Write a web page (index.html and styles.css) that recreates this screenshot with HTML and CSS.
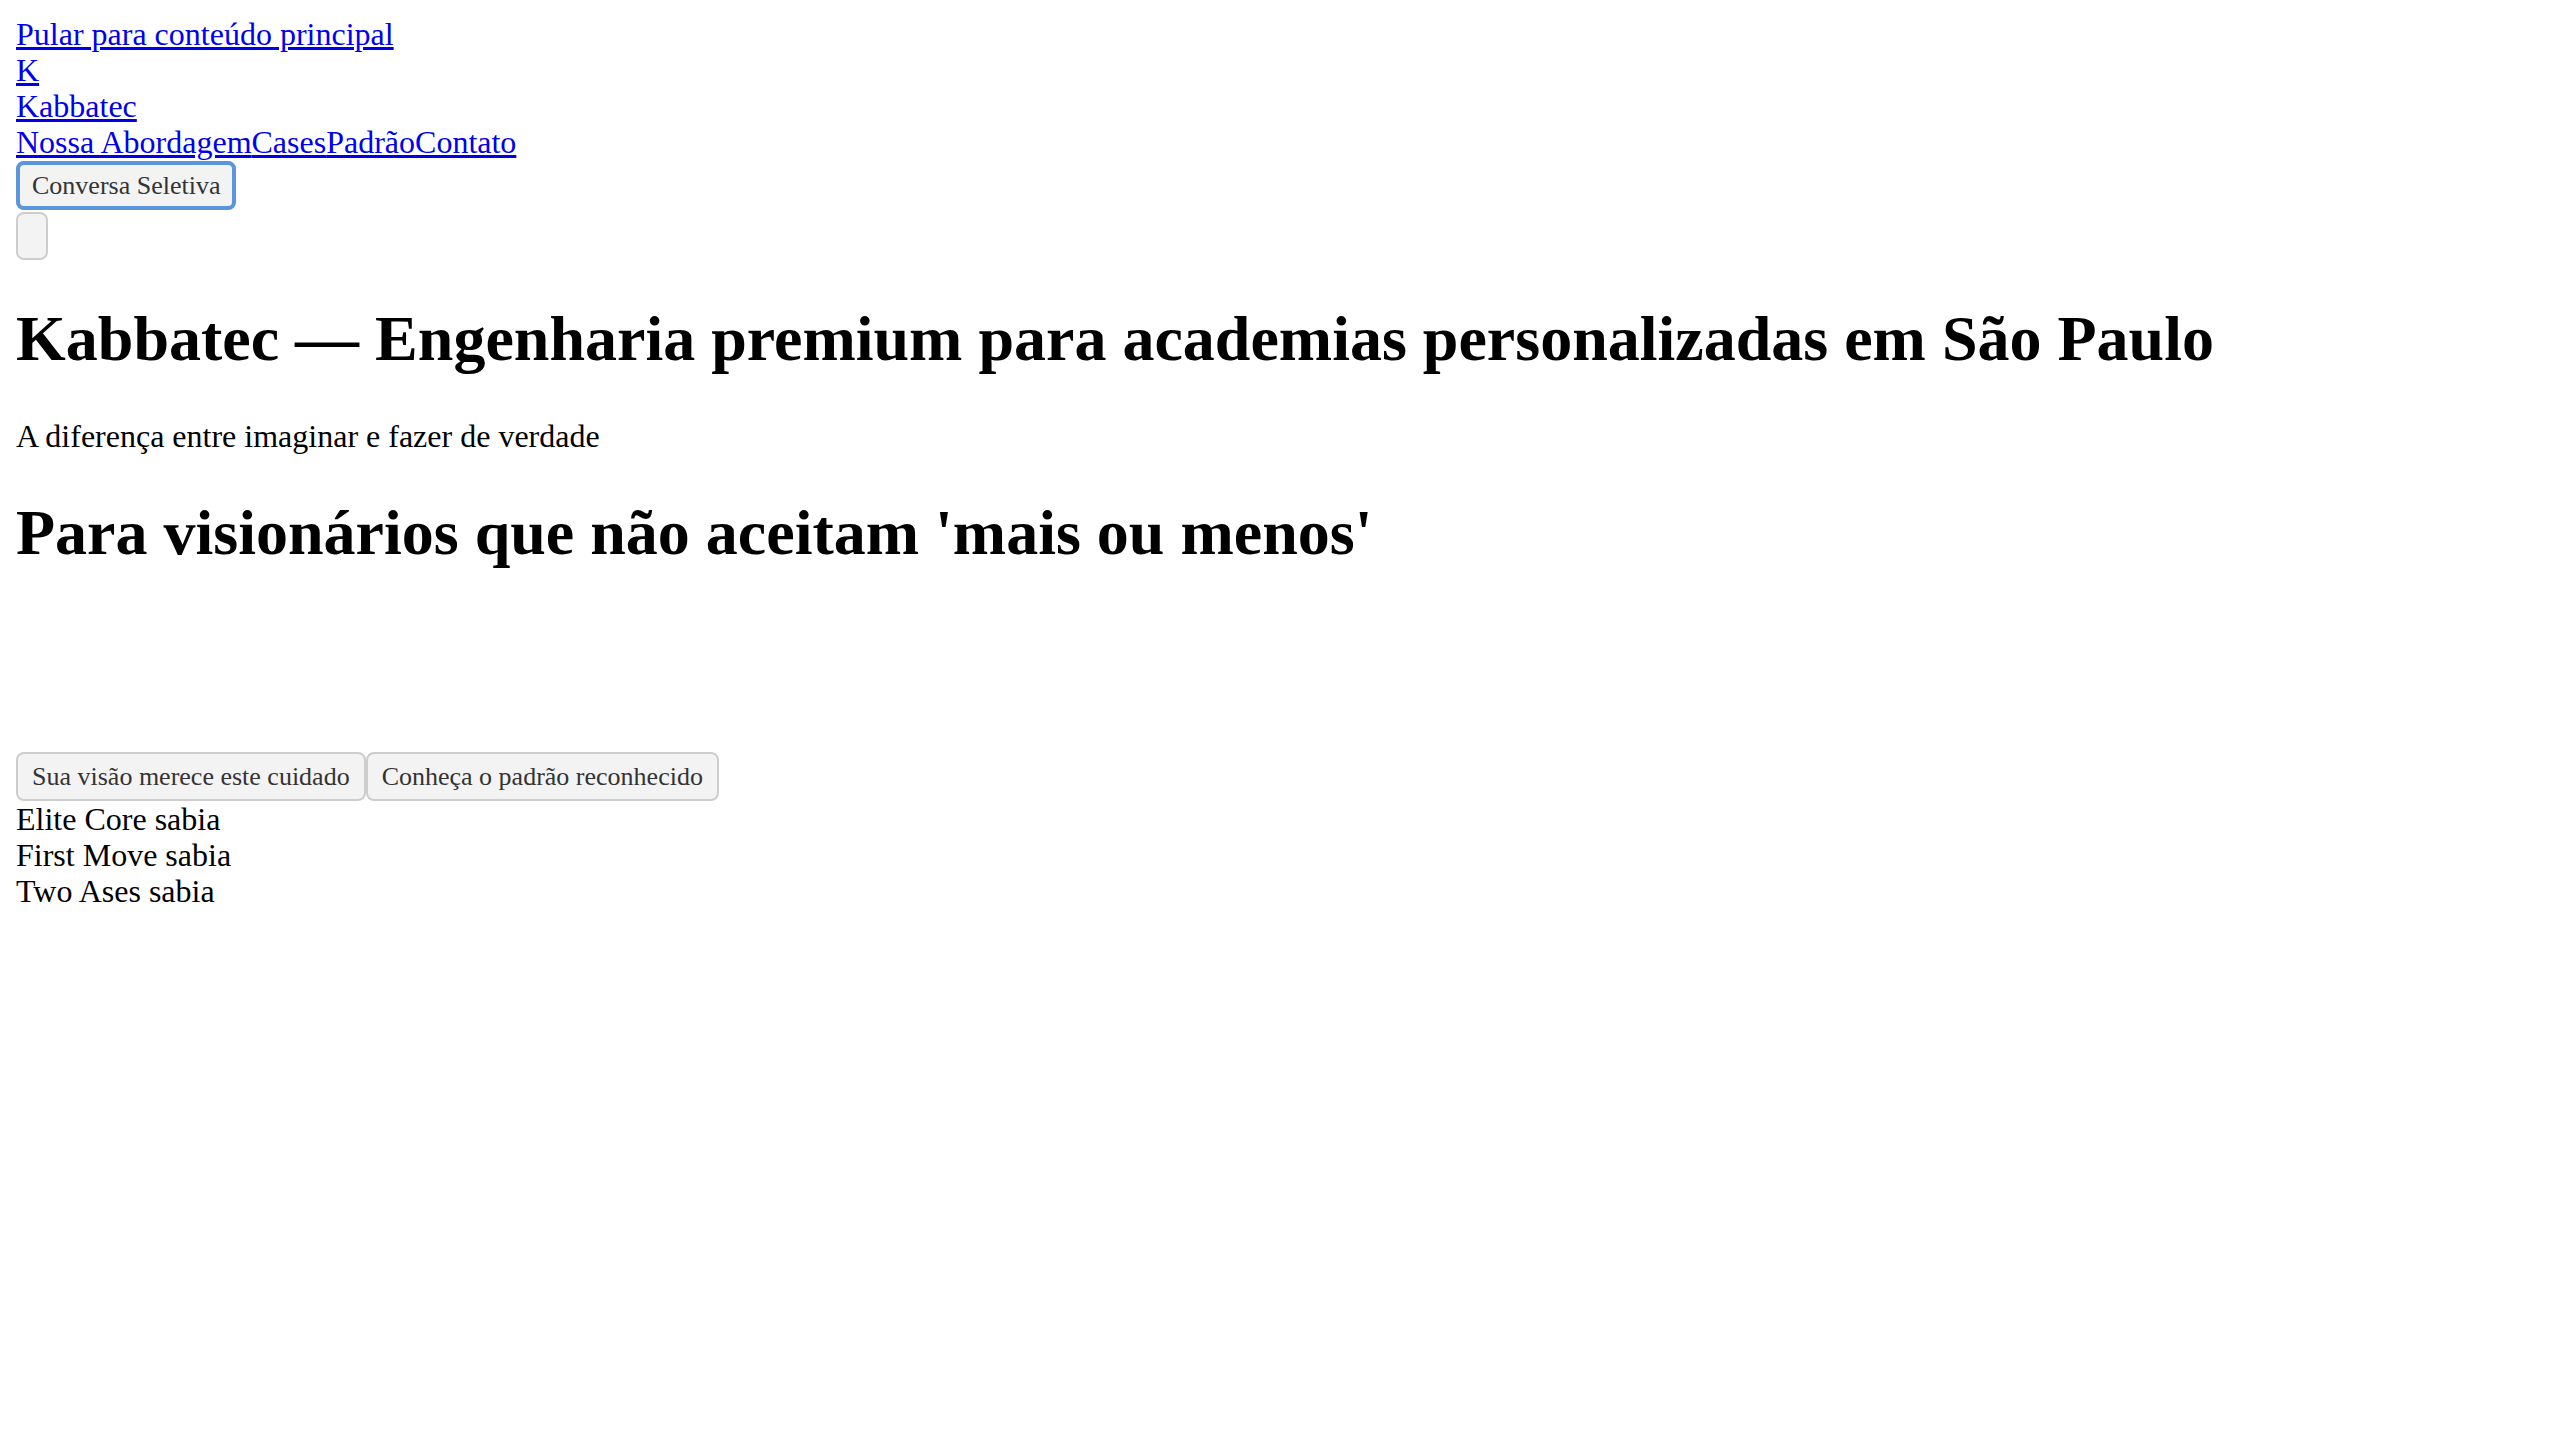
FILE: index.html
```html
<!DOCTYPE html>
<html lang="pt-BR" class="page">
<head>
<meta charset="utf-8">
<title>Kabbatec</title>
<link rel="stylesheet" href="styles.css">
</head>
<body class="doc">
<a class="skip" href="#main">Pular para conteúdo principal</a>
<header class="header">
  <div class="brand">
    <a href="#">K</a>
    <a href="#">Kabbatec</a>
  </div>
  <nav class="nav"><a href="#">Nossa Abordagem</a><a href="#">Cases</a><a href="#">Padrão</a><a href="#">Contato</a></nav>
  <div class="actions">
    <button class="btn btn-focus" type="button">Conversa Seletiva</button>
    <button class="btn btn-menu" type="button" aria-label="Menu"></button>
  </div>
</header>
<main id="main" class="main">
  <h1 class="title">Kabbatec — Engenharia premium para academias personalizadas em São Paulo</h1>
  <p class="lead">A diferença entre imaginar e fazer de verdade</p>
  <h2 class="subtitle">Para visionários que não aceitam 'mais ou menos'</h2>
  <div class="spacer"></div>
  <div class="cta"><button class="btn" type="button">Sua visão merece este cuidado</button><button class="btn" type="button">Conheça o padrão reconhecido</button></div>
  <div class="clients">
    <div>Elite Core sabia</div>
    <div>First Move sabia</div>
    <div>Two Ases sabia</div>
  </div>
</main>
</body>
</html>
```
FILE: styles.css
```css
.page {
  zoom: 2;
}
.doc {
  margin: 8px;
  font-family: "Liberation Serif", "Times New Roman", serif;
  font-size: 16px;
  line-height: 1.13;
  color: #000;
  background: #fff;
}
.skip,
.brand a {
  display: block;
  color: #0000ee;
}
.nav {
  display: flex;
}
.nav a {
  color: #0000ee;
}
.actions {
  display: flex;
  flex-direction: column;
  align-items: flex-start;
}
.btn {
  font-family: "Liberation Serif", "Times New Roman", serif;
  font-size: 13px;
  line-height: 14.5px;
  padding: 4px 7px;
  margin: 0;
  border: 1px solid #cdcdcd;
  border-radius: 4px;
  background: #f3f3f3;
  color: #333;
  -webkit-appearance: none;
  appearance: none;
}
.btn-focus {
  outline: 2px solid #5a95de;
  outline-offset: -2px;
}
.btn-menu {
  width: 16px;
  height: 24px;
  margin-top: 1px;
}
.title {
  font-size: 32px;
  font-weight: bold;
  margin: 21.44px 0;
}
.lead {
  margin: 16px 0;
}
.subtitle {
  font-size: 32px;
  font-weight: bold;
  margin: 21.44px 0;
}
.spacer {
  height: 70px;
}
.cta {
  display: flex;
}
```
